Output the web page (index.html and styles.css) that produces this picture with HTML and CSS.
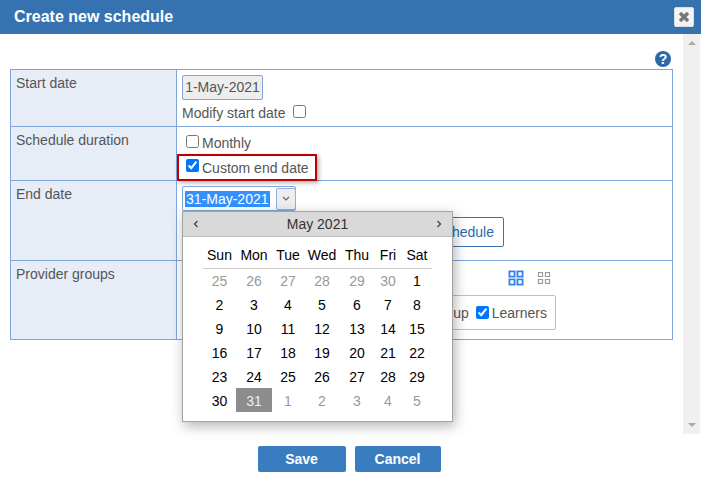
FILE: index.html
```html
<!DOCTYPE html>
<html lang="en">
<head>
    <meta charset="UTF-8">
    <title>Create new schedule</title>
    <link rel="stylesheet" href="styles.css">
</head>
<body>
    <!-- Dialog header -->
    <header class="dialog-header">
        <h1>Create new schedule</h1>
        <button class="close-button" aria-label="Close">
            <svg width="12" height="12" viewBox="0 0 12 12"><path d="M2 2l8 8M10 2l-8 8" stroke="#777" stroke-width="3.4" fill="none"/></svg>
        </button>
    </header>

    <div class="dialog-body">
        <main class="content">
            <div class="help-row"><span class="help-icon">?</span></div>

            <table class="form-table">
                <tr class="row-start">
                    <th>Start date</th>
                    <td>
                        <div class="date-readonly">1-May-2021</div>
                        <label class="line">Modify start date <input type="checkbox" class="check-gap"></label>
                    </td>
                </tr>
                <tr class="row-duration">
                    <th>Schedule duration</th>
                    <td>
                        <label class="option"><input type="checkbox">Monthly</label>
                        <label class="option highlighted"><input type="checkbox" checked>Custom end date</label>
                    </td>
                </tr>
                <tr class="row-end">
                    <th>End date</th>
                    <td>
                        <div class="date-picker">
                            <span class="date-value">31-May-2021</span>
                            <span class="date-toggle">
                                <svg width="8" height="5" viewBox="0 0 8 5"><path d="M1 1l3 3 3-3" stroke="#666" stroke-width="1.2" fill="none"/></svg>
                            </span>

                            <!-- Calendar popup -->
                            <div class="calendar">
                                <div class="calendar-head">
                                    <svg width="6" height="8" viewBox="0 0 6 8"><path d="M4.5 1L1.5 4l3 3" stroke="#444" stroke-width="1.3" fill="none"/></svg>
                                    <span>May 2021</span>
                                    <svg width="6" height="8" viewBox="0 0 6 8"><path d="M1.5 1l3 3-3 3" stroke="#444" stroke-width="1.3" fill="none"/></svg>
                                </div>
                                <div class="calendar-grid">
                                    <b>Sun</b><b>Mon</b><b>Tue</b><b>Wed</b><b>Thu</b><b>Fri</b><b>Sat</b>
                                    <i>25</i><i>26</i><i>27</i><i>28</i><i>29</i><i>30</i><span>1</span>
                                    <span>2</span><span>3</span><span>4</span><span>5</span><span>6</span><span>7</span><span>8</span>
                                    <span>9</span><span>10</span><span>11</span><span>12</span><span>13</span><span>14</span><span>15</span>
                                    <span>16</span><span>17</span><span>18</span><span>19</span><span>20</span><span>21</span><span>22</span>
                                    <span>23</span><span>24</span><span>25</span><span>26</span><span>27</span><span>28</span><span>29</span>
                                    <span>30</span><span class="selected">31</span><i>1</i><i>2</i><i>3</i><i>4</i><i>5</i>
                                </div>
                            </div>
                        </div>
                        <div class="schedule-row"><button class="outline-button">Create schedule</button></div>
                    </td>
                </tr>
                <tr class="row-groups">
                    <th>Provider groups</th>
                    <td>
                        <div class="view-icons">
                            <svg class="view-on" width="16" height="16" viewBox="0 0 16 16"><path d="M1.5 1.5h5v5h-5zM9.5 1.5h5v5h-5zM1.5 9.5h5v5h-5zM9.5 9.5h5v5h-5z" stroke="#2f7fe8" stroke-width="1.6" fill="#fff"/></svg>
                            <svg width="14" height="14" viewBox="0 0 14 14"><path d="M1.5 1.5h4v4h-4zM8.5 1.5h4v4h-4zM1.5 8.5h4v4h-4zM8.5 8.5h4v4h-4z" stroke="#999" stroke-width="1.2" fill="#fff"/></svg>
                        </div>
                        <div class="group-box">
                            <label>Group</label>
                            <label class="group-check"><input type="checkbox" checked>Learners</label>
                        </div>
                    </td>
                </tr>
            </table>
        </main>

        <div class="scrollbar">
            <span class="arrow-up"></span>
            <span class="arrow-down"></span>
        </div>
    </div>

    <footer class="dialog-footer">
        <button class="primary-button save">Save</button>
        <button class="primary-button cancel">Cancel</button>
    </footer>
</body>
</html>
```

FILE: styles.css
```css
html, body {
    height: 100%;
}

body {
    font-family: "Liberation Sans", Arial, sans-serif;
    font-size: 14px;
    color: #555;
    margin: 0;
    padding: 0;
    background-color: #fff;
    display: flex;
    flex-direction: column;
    overflow: hidden;
}

.dialog-header {
    height: 34px;
    flex: none;
    background-color: #3672b0;
    color: #fff;
    display: flex;
    align-items: center;
    justify-content: space-between;
    padding: 0 7px 0 14px;
}

.dialog-header h1 {
    font-size: 16px;
    margin: 0;
}

.close-button {
    width: 20px;
    height: 20px;
    padding: 0;
    background-color: #f4f4f4;
    border: 1px solid #ddd;
    border-radius: 2px;
    display: flex;
    align-items: center;
    justify-content: center;
}

.dialog-body {
    height: 400px;
    flex: none;
    display: flex;
}

.content {
    width: 673px;
    margin-left: 10px;
}

.help-row {
    height: 35px;
    display: flex;
    justify-content: flex-end;
    align-items: flex-end;
    padding-right: 12px;
}

.help-icon {
    width: 16px;
    height: 16px;
    border-radius: 50%;
    background-color: #2a69ac;
    color: #fff;
    font-weight: bold;
    font-size: 14px;
    line-height: 16px;
    text-align: center;
    margin-bottom: 2px;
}

.form-table {
    width: 663px;
    border-collapse: collapse;
    table-layout: fixed;
}

.form-table th,
.form-table td {
    border: 1px solid #7ea6dc;
    vertical-align: top;
    padding: 0;
}

.form-table th {
    width: 155px;
    background-color: #e6edf7;
    font-weight: normal;
    text-align: left;
    padding: 5px 5px;
    line-height: 16px;
}

.row-start { height: 57px; }
.row-duration { height: 54px; }
.row-end { height: 80px; }
.row-groups { height: 79px; }

.row-start td { padding: 5px 5px 0; }

.date-readonly {
    width: 79px;
    height: 23px;
    line-height: 23px;
    background-color: #eee;
    border: 1px solid #7ea6dc;
    border-radius: 2px;
    text-align: center;
}

.line {
    display: flex;
    align-items: center;
    margin-top: 4px;
    height: 18px;
}

.line input,
.option input {
    margin: 0 0 4px;
}

.group-check input {
    margin: 0;
}

.check-gap {
    margin-left: 7px !important;
}

.row-duration td {
    padding: 7px 0 0 0;
}

.option {
    display: flex;
    align-items: center;
    height: 18px;
    padding-left: 9px;
    gap: 3px;
}

.option.highlighted {
    box-sizing: border-box;
    width: 140px;
    height: 27px;
    margin-top: 2px;
    margin-bottom: -3px;
    padding-left: 7px;
    border: 2px solid #c00000;
    box-shadow: 2px 2px 4px rgba(0, 0, 0, 0.3);
    background-color: #fff;
    position: relative;
}

.row-end td {
    padding: 5px 5px 0;
}

.date-picker {
    position: relative;
    box-sizing: border-box;
    width: 114px;
    height: 25px;
    border: 1px solid #7ea6dc;
    border-radius: 2px;
    display: flex;
    align-items: center;
    padding-left: 2px;
}

.date-value {
    background-color: #3390ff;
    color: #fff;
    line-height: 16px;
    padding: 0 1px;
    white-space: nowrap;
}

.date-toggle {
    width: 18px;
    height: 20px;
    margin-left: 6px;
    background-color: #eee;
    border: 1px solid #8fb0dc;
    border-radius: 2px;
    display: flex;
    align-items: center;
    justify-content: center;
    flex: none;
}

.calendar {
    position: absolute;
    left: -1px;
    top: 24px;
    z-index: 5;
    box-sizing: border-box;
    width: 271px;
    height: 211px;
    background-color: #fff;
    border: 1px solid #a3a3a3;
    box-shadow: 2px 4px 12px rgba(0, 0, 0, 0.3);
}

.calendar-head {
    height: 25px;
    box-sizing: border-box;
    background-color: #d9d9d9;
    border-bottom: 1px solid #bbb;
    color: #333;
    display: flex;
    align-items: center;
    justify-content: space-between;
    padding: 0 10px;
}

.calendar-grid {
    display: grid;
    grid-template-columns: 33px 36px 32px 36px 34px 28px 30px;
    grid-template-rows: 31px repeat(6, 24px);
    margin-left: 20px;
    color: #000;
    text-align: center;
    line-height: 26px;
}

.calendar-grid b {
    font-weight: normal;
    border-bottom: 1px solid #ccc;
    line-height: 36px;
    height: 31px;
}

.calendar-grid i {
    font-style: normal;
    color: #999;
}

.calendar-grid .selected {
    background-color: #8c8c8c;
    color: #eee;
}

.schedule-row {
    display: flex;
    justify-content: flex-end;
    width: 322px;
    margin-top: 6px;
}

.outline-button {
    width: 130px;
    height: 30px;
    padding: 0;
    font: inherit;
    color: #2a69ac;
    background-color: #fff;
    border: 1px solid #3672b0;
    border-radius: 2px;
    text-align: right;
    padding-right: 9px;
}

.row-groups td {
    padding: 9px 5px 0;
}

.view-icons {
    height: 16px;
    width: 369px;
    display: flex;
    justify-content: flex-end;
    align-items: center;
    gap: 13px;
}

.view-on {
    background-color: #cfe2fb;
}

.group-box {
    box-sizing: border-box;
    width: 374px;
    height: 35px;
    margin-top: 9px;
    border: 1px solid #a9c4e8;
    border-radius: 2px;
    display: flex;
    align-items: center;
    justify-content: flex-end;
    padding-right: 8px;
    gap: 7px;
}

.group-check {
    display: flex;
    align-items: center;
    gap: 3px;
}

.scrollbar {
    width: 17px;
    background-color: #f0f0f0;
    display: flex;
    flex-direction: column;
    justify-content: space-between;
    align-items: center;
    padding: 7px 0;
    box-sizing: border-box;
}

.arrow-up {
    border: 4px solid transparent;
    border-top: 0;
    border-bottom: 4px solid #aaa;
}

.arrow-down {
    border: 4px solid transparent;
    border-bottom: 0;
    border-top: 4px solid #aaa;
}

.dialog-footer {
    flex: 1;
    display: flex;
    justify-content: center;
    align-items: flex-start;
    gap: 9px;
    padding-top: 12px;
    padding-right: 3px;
}

.primary-button {
    height: 26px;
    padding: 0;
    background-color: #3a7cc0;
    color: #fff;
    border: none;
    border-radius: 2px;
    font: bold 14px "Liberation Sans", Arial, sans-serif;
}

.save { width: 88px; }
.cancel { width: 86px; }
```
